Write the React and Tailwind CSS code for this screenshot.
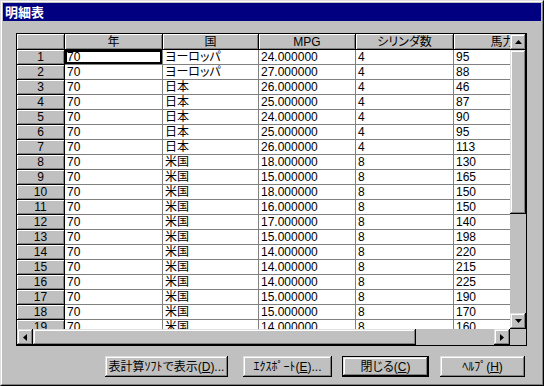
import React from "react";

const ROWS = [
  ["ヨーロッパ", "24.000000", "4", "95"],
  ["ヨーロッパ", "27.000000", "4", "88"],
  ["日本", "26.000000", "4", "46"],
  ["日本", "25.000000", "4", "87"],
  ["日本", "24.000000", "4", "90"],
  ["日本", "25.000000", "4", "95"],
  ["日本", "26.000000", "4", "113"],
  ["米国", "18.000000", "8", "130"],
  ["米国", "15.000000", "8", "165"],
  ["米国", "18.000000", "8", "150"],
  ["米国", "16.000000", "8", "150"],
  ["米国", "17.000000", "8", "140"],
  ["米国", "15.000000", "8", "198"],
  ["米国", "14.000000", "8", "220"],
  ["米国", "14.000000", "8", "215"],
  ["米国", "14.000000", "8", "225"],
  ["米国", "15.000000", "8", "190"],
  ["米国", "15.000000", "8", "170"],
  ["米国", "14.000000", "8", "160"],
];

const raised =
  "bg-[#c0c0c0] shadow-[inset_-1px_-1px_0_#000,inset_1px_1px_0_#dfdfdf,inset_-2px_-2px_0_#808080,inset_2px_2px_0_#fff]";

const fixedCell =
  "bg-[#c0c0c0] border-r border-b border-black shadow-[inset_1px_1px_0_#fff,inset_-1px_-1px_0_#808080] flex items-center justify-center shrink-0";

const dataCell =
  "bg-white border-r border-b border-[#808080] pl-[2px] flex items-center shrink-0 whitespace-nowrap overflow-hidden";

const Arrow = ({ dir }) => {
  const pts = {
    up: "3.5,0 7,4 0,4",
    down: "0,0 7,0 3.5,4",
    left: "4,0 4,7 0,3.5",
    right: "0,0 4,3.5 0,7",
  }[dir];
  const vertical = dir === "up" || dir === "down";
  return (
    <svg
      width={vertical ? 7 : 4}
      height={vertical ? 4 : 7}
      viewBox={vertical ? "0 0 7 4" : "0 0 4 7"}
    >
      <polygon points={pts} fill="#000" />
    </svg>
  );
};

const Btn = ({ className, children }) => (
  <div className={`h-[21px] flex items-center justify-center ${className}`}>
    {children}
  </div>
);

export default function App() {
  return (
    <div className="w-[544px] h-[386px] bg-[#c0c0c0] border border-t-[#dfdfdf] border-l-[#dfdfdf] border-r-black border-b-black font-['Liberation_Sans_Narrow','Liberation_Sans','Noto_Sans_CJK_JP',sans-serif] text-[12px] text-black [font-feature-settings:'palt'] overflow-hidden">
      <div className="h-full border border-t-white border-l-white border-r-[#808080] border-b-[#808080] p-px flex flex-col">
        {/* title bar */}
        <div className="h-[18px] bg-[#000080] text-white font-bold text-[13px] pl-[2px] flex items-center font-['Noto_Sans_CJK_JP',sans-serif]">
          明細表
        </div>

        {/* grid */}
        <div className="ml-[13px] mt-[12px] w-[511px] h-[313px] border border-black flex flex-col">
          <div className="flex h-[295px]">
            <div className="flex-1 overflow-hidden">
              <div className="flex h-[16px]">
                <div className={`${fixedCell} w-[48px]`} />
                <div className={`${fixedCell} w-[98px]`}>年</div>
                <div className={`${fixedCell} w-[96px]`}>国</div>
                <div className={`${fixedCell} w-[97px]`}>MPG</div>
                <div className={`${fixedCell} w-[98px]`}>シリンダ数</div>
                <div className={`${fixedCell} w-[98px]`}>馬力</div>
              </div>
              {ROWS.map((r, i) => (
                <div key={i} className="flex h-[15px]">
                  <div className={`${fixedCell} w-[48px]`}>{i + 1}</div>
                  <div
                    className={`${dataCell} w-[98px] ${
                      i === 0 ? "shadow-[inset_0_0_0_2px_#000]" : ""
                    }`}
                  >
                    70
                  </div>
                  <div className={`${dataCell} w-[96px]`}>{r[0]}</div>
                  <div className={`${dataCell} w-[97px]`}>{r[1]}</div>
                  <div className={`${dataCell} w-[98px]`}>{r[2]}</div>
                  <div className={`${dataCell} w-[98px]`}>{r[3]}</div>
                </div>
              ))}
            </div>
            {/* vertical scrollbar */}
            <div className="w-[16px] flex flex-col bg-[#c0c0c0]">
              <div className={`h-[16px] flex items-center justify-center ${raised}`}>
                <Arrow dir="up" />
              </div>
              <div className={`h-[164px] ${raised}`} />
              <div className="flex-1" />
              <div className={`h-[16px] flex items-center justify-center ${raised}`}>
                <Arrow dir="down" />
              </div>
            </div>
          </div>
          <div className="flex h-[16px]">
            {/* horizontal scrollbar */}
            <div className="flex-1 flex bg-[#c0c0c0]">
              <div className={`w-[16px] flex items-center justify-center ${raised}`}>
                <Arrow dir="left" />
              </div>
              <div className={`w-[383px] ${raised}`} />
              <div className="flex-1" />
              <div className={`w-[16px] flex items-center justify-center ${raised}`}>
                <Arrow dir="right" />
              </div>
            </div>
            <div className="w-[16px] bg-[#c0c0c0]" />
          </div>
        </div>

        {/* buttons */}
        <div className="flex mt-[10px] ml-[102px]">
          <Btn className={`w-[123px] ${raised}`}>
            表計算ｿﾌﾄで表示(<span className="underline">D</span>)...
          </Btn>
          <Btn className={`w-[89px] ml-[15px] ${raised}`}>
            ｴｸｽﾎﾟｰﾄ(<span className="underline">E</span>)...
          </Btn>
          <div className="w-[87px] ml-[10px] h-[21px] border border-black">
            <Btn className={`h-full ${raised}`}>
              閉じる(<span className="underline">C</span>)
            </Btn>
          </div>
          <Btn className={`w-[85px] ml-[11px] ${raised}`}>
            ﾍﾙﾌﾟ(<span className="underline">H</span>)
          </Btn>
        </div>
      </div>
    </div>
  );
}
